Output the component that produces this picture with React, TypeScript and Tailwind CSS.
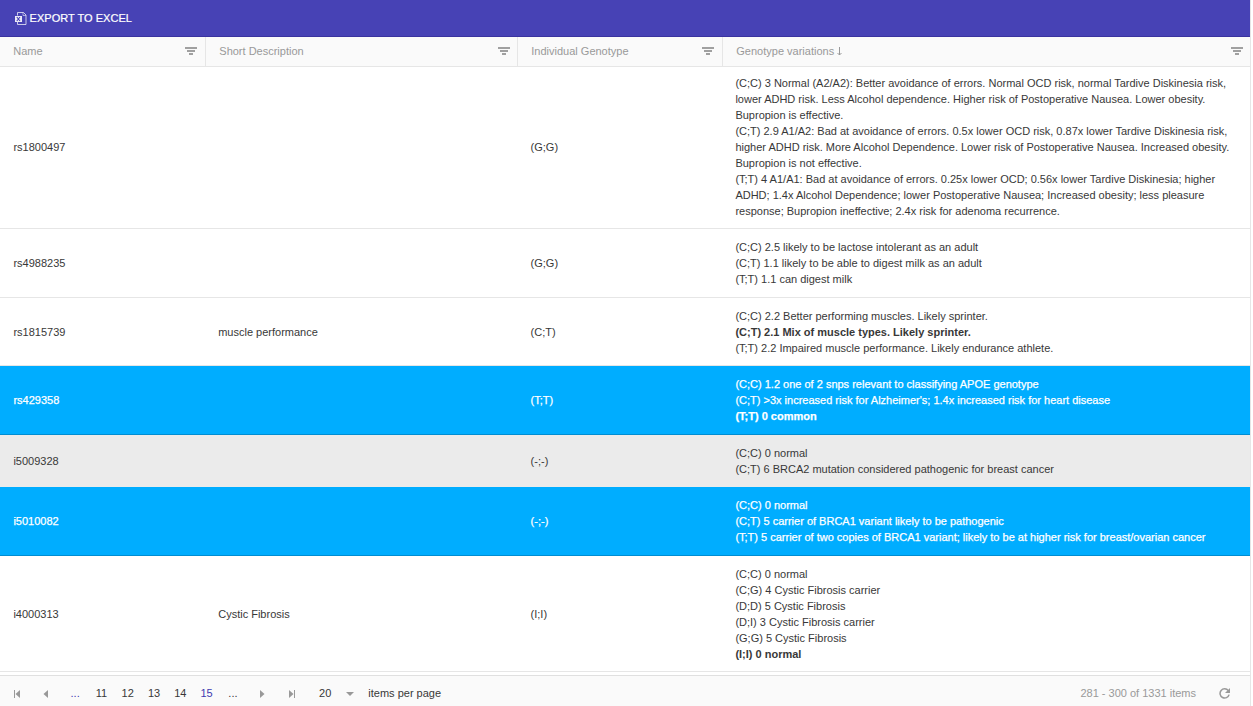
import React from "react";

type Line = { text: string; bold?: boolean };
type Row = {
  name: string;
  description: string;
  genotype: string;
  lines: Line[];
  height: string;
  tone: "plain" | "hover" | "selected";
};

const l = (text: string, bold = false): Line => ({ text, bold });

const rows: Row[] = [
  {
    name: "rs1800497",
    description: "",
    genotype: "(G;G)",
    height: "h-[162px] pb-px",
    tone: "plain",
    lines: [
      l("(C;C) 3 Normal (A2/A2): Better avoidance of errors. Normal OCD risk, normal Tardive Diskinesia risk,"),
      l("lower ADHD risk. Less Alcohol dependence. Higher risk of Postoperative Nausea. Lower obesity."),
      l("Bupropion is effective."),
      l("(C;T) 2.9 A1/A2: Bad at avoidance of errors. 0.5x lower OCD risk, 0.87x lower Tardive Diskinesia risk,"),
      l("higher ADHD risk. More Alcohol Dependence. Lower risk of Postoperative Nausea. Increased obesity."),
      l("Bupropion is not effective."),
      l("(T;T) 4 A1/A1: Bad at avoidance of errors. 0.25x lower OCD; 0.56x lower Tardive Diskinesia; higher"),
      l("ADHD; 1.4x Alcohol Dependence; lower Postoperative Nausea; Increased obesity; less pleasure"),
      l("response; Bupropion ineffective; 2.4x risk for adenoma recurrence."),
    ],
  },
  {
    name: "rs4988235",
    description: "",
    genotype: "(G;G)",
    height: "h-[69px]",
    tone: "plain",
    lines: [
      l("(C;C) 2.5 likely to be lactose intolerant as an adult"),
      l("(C;T) 1.1 likely to be able to digest milk as an adult"),
      l("(T;T) 1.1 can digest milk"),
    ],
  },
  {
    name: "rs1815739",
    description: "muscle performance",
    genotype: "(C;T)",
    height: "h-[68px]",
    tone: "plain",
    lines: [
      l("(C;C) 2.2 Better performing muscles. Likely sprinter."),
      l("(C;T) 2.1 Mix of muscle types. Likely sprinter.", true),
      l("(T;T) 2.2 Impaired muscle performance. Likely endurance athlete."),
    ],
  },
  {
    name: "rs429358",
    description: "",
    genotype: "(T;T)",
    height: "h-[69px]",
    tone: "selected",
    lines: [
      l("(C;C) 1.2 one of 2 snps relevant to classifying APOE genotype"),
      l("(C;T) >3x increased risk for Alzheimer's; 1.4x increased risk for heart disease"),
      l("(T;T) 0 common", true),
    ],
  },
  {
    name: "i5009328",
    description: "",
    genotype: "(-;-)",
    height: "h-[52px]",
    tone: "hover",
    lines: [l("(C;C) 0 normal"), l("(C;T) 6 BRCA2 mutation considered pathogenic for breast cancer")],
  },
  {
    name: "i5010082",
    description: "",
    genotype: "(-;-)",
    height: "h-[69px]",
    tone: "selected",
    lines: [
      l("(C;C) 0 normal"),
      l("(C;T) 5 carrier of BRCA1 variant likely to be pathogenic"),
      l("(T;T) 5 carrier of two copies of BRCA1 variant; likely to be at higher risk for breast/ovarian cancer"),
    ],
  },
  {
    name: "i4000313",
    description: "Cystic Fibrosis",
    genotype: "(I;I)",
    height: "h-[116px]",
    tone: "plain",
    lines: [
      l("(C;C) 0 normal"),
      l("(C;G) 4 Cystic Fibrosis carrier"),
      l("(D;D) 5 Cystic Fibrosis"),
      l("(D;I) 3 Cystic Fibrosis carrier"),
      l("(G;G) 5 Cystic Fibrosis"),
      l("(I;I) 0 normal", true),
    ],
  },
];

const tones = {
  plain: "border-[#e6e6e6] bg-white text-[#383838]",
  hover: "border-[#ebebeb] bg-[#ebebeb] text-[#383838]",
  selected: "border-[#008dd2] bg-[#00adff] text-white [-webkit-text-stroke:0.25px_white]",
};

function FilterIcon() {
  return (
    <svg width="12" height="8" viewBox="0 0 12 8" fill="#a0a0a0" shapeRendering="crispEdges">
      <rect width="12" height="2" />
      <rect x="2" y="3" width="8" height="2" />
      <rect x="4" y="6" width="4" height="2" />
    </svg>
  );
}

function ExcelIcon() {
  return (
    <svg width="12" height="13" viewBox="0 0 12 13" fill="none" stroke="white" opacity="0.9">
      <path d="M2.5 3.5V.5h6l2.5 2.5v9.5H2.5V10" strokeWidth="0.8" />
      <path d="M8 .5V3.5h3" strokeWidth="0.6" />
      <rect x="0" y="4" width="7" height="6" fill="white" stroke="none" />
      <path d="M1.8 5l3.2 4M5 5L1.8 9" stroke="#4840b5" strokeWidth="1.1" />
    </svg>
  );
}

function HeaderCell({ label, className, sorted }: { label: string; className: string; sorted?: boolean }) {
  return (
    <div className={`${className} flex items-center justify-between border-[#e6e6e6] pb-[2px] pl-[13.3px]`}>
      <span className="flex items-center gap-[3px]">
        {label}
        {sorted && (
          <svg className="mt-[2px]" width="5" height="9" viewBox="0 0 5 9" fill="none" stroke="#999999">
            <path d="M2.5 0v8M.5 6l2 2 2-2" />
          </svg>
        )}
      </span>
      <FilterIcon />
    </div>
  );
}

function Pager() {
  return (
    <footer className="mt-[3px] flex h-[31px] items-center border-t border-[#e0e0e0] bg-[#fafafa] pt-[5px] text-[#383838]">
      <div className="flex w-[62px] items-center pl-[14px]">
        <svg width="6" height="8" viewBox="0 0 6 8" fill="#999999"><path d="M0 0h1v8H0zM6 0v8L1.5 4z" /></svg>
        <svg className="ml-[23px]" width="5" height="8" viewBox="0 0 5 8" fill="#999999"><path d="M5 0v8L.5 4z" /></svg>
      </div>
      <div className="grid grid-cols-[repeat(7,26.3px)] pb-[2px] text-center">
        <span className="text-[#3f3ab0]">...</span>
        <span>11</span>
        <span>12</span>
        <span>13</span>
        <span>14</span>
        <span className="text-[#3f3ab0]">15</span>
        <span>...</span>
      </div>
      <svg className="ml-[14px]" width="5" height="8" viewBox="0 0 5 8" fill="#999999"><path d="M0 0v8l4.5-4z" /></svg>
      <svg className="ml-[24px]" width="6" height="8" viewBox="0 0 6 8" fill="#999999"><path d="M5 0h1v8H5zM0 0v8l4.5-4z" /></svg>
      <span className="ml-[24px] pb-[2px]">20</span>
      <svg className="ml-[15px]" width="8" height="4" viewBox="0 0 8 4" fill="#999999"><path d="M0 0h8L4 4z" /></svg>
      <span className="ml-[14px] pb-[2px]">items per page</span>
      <span className="ml-auto pb-[2px] text-[#999999]">281 - 300 of 1331 items</span>
      <svg className="ml-[23px] mr-[20px]" width="11" height="11" viewBox="0 0 11 11" fill="none" stroke="#999999" strokeWidth="1.5">
        <path d="M9.3 2.6A4.6 4.6 0 1 0 10.1 6.6" />
        <path d="M11 0v5H6z" fill="#999999" stroke="none" />
      </svg>
    </footer>
  );
}

export default function App() {
  return (
    <div className="h-[706px] w-full overflow-hidden bg-white font-['Liberation_Sans',Arial,sans-serif] text-[11px] leading-4">
      <div className="w-[1251px] border-r border-[#e6e6e6]">
        <header className="flex h-[37px] items-center gap-[2.5px] border-b border-[#3a339f] bg-[#4742b5] pl-[15px] text-white">
          <ExcelIcon />
          <span className="tracking-[0.04px] [-webkit-text-stroke:0.2px_white]">EXPORT TO EXCEL</span>
        </header>
        <div className="grid h-[30px] grid-cols-[206px_312px_205px_527px] border-b border-[#e6e6e6] bg-[#fafafa] text-[#999999]">
          <HeaderCell label="Name" className="border-r pr-[8px]" />
          <HeaderCell label="Short Description" className="border-r pr-[7px]" />
          <HeaderCell label="Individual Genotype" className="border-r pr-[8px]" />
          <HeaderCell label="Genotype variations" className="pr-[7px]" sorted />
        </div>
        <main>
          {rows.map((row) => (
            <div
              key={row.name}
              className={`grid grid-cols-[205px_312px_205px_528px] ${row.height} ${tones[row.tone]} items-center whitespace-nowrap border-b`}
            >
              <div className="pl-[13.4px]">{row.name}</div>
              <div className="pl-[13.2px]">{row.description}</div>
              <div className="pl-[13.6px]">{row.genotype}</div>
              <div className="pl-[13.4px]">
                {row.lines.map((line) => (
                  <div key={line.text} className={line.bold ? "font-bold" : ""}>
                    {line.text}
                  </div>
                ))}
              </div>
            </div>
          ))}
        </main>
        <Pager />
      </div>
    </div>
  );
}
